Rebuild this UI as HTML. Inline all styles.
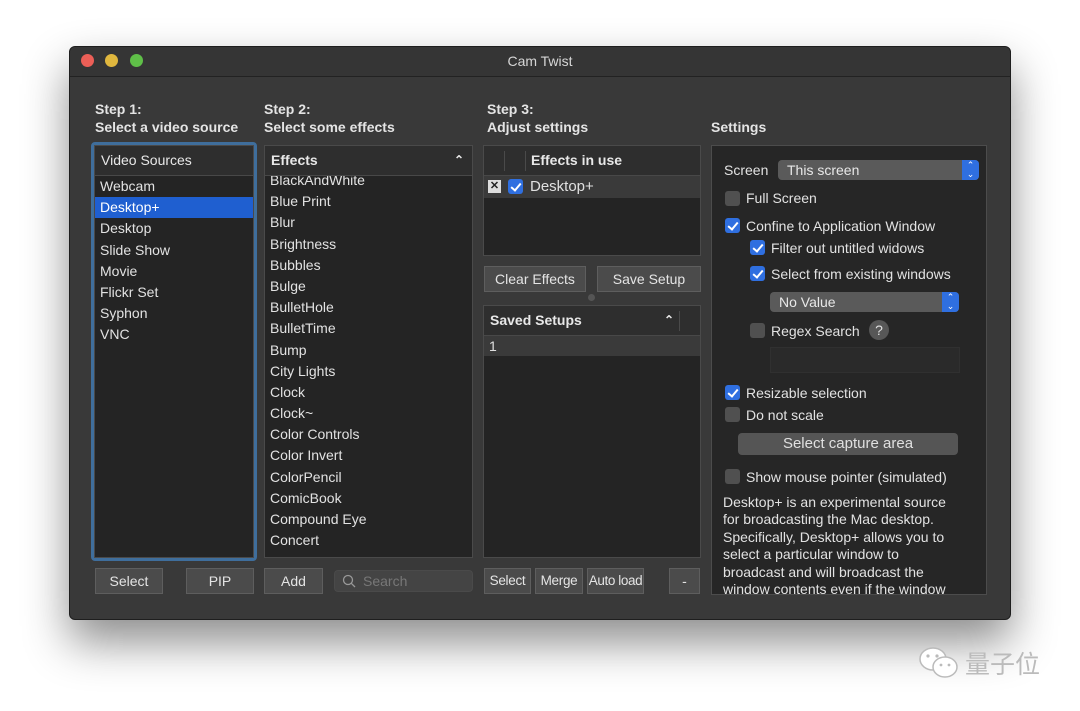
<!DOCTYPE html>
<html><head><meta charset="utf-8"><style>
*{box-sizing:border-box;margin:0;padding:0}
body{width:1080px;height:711px;background:#fff;position:relative;overflow:hidden;font-family:"Liberation Sans",sans-serif;color:#e0e0e0}
.win{position:absolute;left:69px;top:46px;width:942px;height:574px;background:#393939;border:1px solid #1e1e1e;border-radius:6px;box-shadow:0 22px 45px rgba(0,0,0,.45)}
.tb{position:absolute;left:0;top:0;width:100%;height:30px;background:#353535;border-bottom:1px solid #222;border-radius:6px 6px 0 0;text-align:center;line-height:29px;font-size:14px;color:#d6d6d6}
.dot{position:absolute;top:7px;width:13px;height:13px;border-radius:50%}
.a{position:absolute}
.h{font-size:14px;font-weight:bold;line-height:18px;color:#e4e4e4}
.list{position:absolute;background:#242424;border:1px solid #4a4a4a}
.hd{height:30px;background:#2e2e2e;border-bottom:1px solid #484848;font-size:14px;font-weight:bold;line-height:29px;padding-left:6px;color:#e8e8e8;position:relative}
.it{font-size:14px;height:21.2px;line-height:21px;padding-left:5px;color:#e2e2e2}
.btn{position:absolute;height:26px;background:#4b4b4b;border:1px solid #5e5e5e;font-size:14px;line-height:24px;text-align:center;color:#e4e4e4;white-space:nowrap;overflow:hidden}
.cb{position:absolute;width:15px;height:15px;border-radius:3px;background:#505050}
.cb.on{background:#2f6fe0}
.cb.on::after{content:"";position:absolute;left:5px;top:2px;width:4px;height:8px;border:solid #fff;border-width:0 2px 2px 0;transform:rotate(40deg)}
.lb{position:absolute;font-size:14px;line-height:16px;color:#e2e2e2;white-space:nowrap}
.pop{position:absolute;height:20px;background:#5a5a5a;border-radius:4px;font-size:14px;line-height:20px;padding-left:9px;color:#e8e8e8}
.pop .ar{position:absolute;right:0;top:0;width:17px;height:20px;background:#2f6fe0;border-radius:0 4px 4px 0;color:#fff;font-size:9px;line-height:9px;text-align:center;padding-top:1px}
</style></head><body>
<div class="win">
<div class="tb">Cam Twist</div>
<div class="dot" style="left:11px;background:#ec5f57"></div>
<div class="dot" style="left:35px;background:#e0b73e"></div>
<div class="dot" style="left:60px;background:#5fbf48"></div>

<div class="a h" style="left:25px;top:53px">Step 1:<br>Select a video source</div>
<div class="a h" style="left:194px;top:53px">Step 2:<br>Select some effects</div>
<div class="a h" style="left:417px;top:53px">Step 3:<br>Adjust settings</div>
<div class="a h" style="left:641px;top:71px">Settings</div>

<div class="a" style="left:21px;top:95px;width:166px;height:419px;border:3px solid #3f6e9c;border-radius:4px"></div>
<div class="list" style="left:24px;top:98px;width:160px;height:413px">
<div class="hd" style="font-weight:normal">Video Sources</div>
<div class="it">Webcam</div>
<div class="it" style="background:#1f5fd0;color:#fff">Desktop+</div>
<div class="it">Desktop</div><div class="it">Slide Show</div><div class="it">Movie</div><div class="it">Flickr Set</div><div class="it">Syphon</div><div class="it">VNC</div>
</div>

<div class="list" style="left:194px;top:98px;width:209px;height:413px;overflow:hidden">
<div class="hd">Effects<span style="position:absolute;right:8px;top:0;font-size:12px">&#8963;</span></div>
<div style="margin-top:-6px">
<div class="it">BlackAndWhite</div><div class="it">Blue Print</div><div class="it">Blur</div><div class="it">Brightness</div><div class="it">Bubbles</div><div class="it">Bulge</div><div class="it">BulletHole</div><div class="it">BulletTime</div><div class="it">Bump</div><div class="it">City Lights</div><div class="it">Clock</div><div class="it">Clock~</div><div class="it">Color Controls</div><div class="it">Color Invert</div><div class="it">ColorPencil</div><div class="it">ComicBook</div><div class="it">Compound Eye</div><div class="it">Concert</div><div class="it">.</div>
</div></div>

<div class="list" style="left:413px;top:98px;width:218px;height:111px">
<div class="hd" style="padding-left:47px">Effects in use<span style="position:absolute;left:20px;top:5px;height:20px;border-left:1px solid #4a4a4a"></span><span style="position:absolute;left:41px;top:5px;height:20px;border-left:1px solid #4a4a4a"></span></div>
<div style="height:22px;background:#3a3a3a;position:relative;font-size:15px;line-height:22px;padding-left:46px">Desktop+
<span style="position:absolute;left:4px;top:4px;width:13px;height:13px;background:#ddd;color:#222;font-size:11px;line-height:13px;text-align:center;font-weight:bold">✕</span>
<span class="cb on" style="left:24px;top:3px"></span></div>
</div>

<div class="btn" style="left:414px;top:219px;width:102px">Clear Effects</div>
<div class="btn" style="left:527px;top:219px;width:104px">Save Setup</div>
<div class="a" style="left:518px;top:247px;width:7px;height:7px;border-radius:50%;background:#555"></div>

<div class="list" style="left:413px;top:258px;width:218px;height:253px">
<div class="hd">Saved Setups<span style="position:absolute;right:26px;top:0;font-size:12px">&#8963;</span><span style="position:absolute;right:20px;top:5px;height:20px;border-left:1px solid #4a4a4a"></span></div>
<div style="height:20px;background:#3a3a3a;font-size:14px;line-height:20px;padding-left:5px">1</div>
</div>

<div class="list" style="left:641px;top:98px;width:276px;height:450px;background:#262626;border-color:#4c4c4c;overflow:hidden">
<div class="lb" style="left:12px;top:16px">Screen</div>
<div class="pop" style="left:66px;top:14px;width:201px">This screen<div class="ar">⌃<br>⌄</div></div>
<div class="cb" style="left:13px;top:45px"></div><div class="lb" style="left:34px;top:44px">Full Screen</div>
<div class="cb on" style="left:13px;top:72px"></div><div class="lb" style="left:34px;top:72px">Confine to Application Window</div>
<div class="cb on" style="left:38px;top:94px"></div><div class="lb" style="left:59px;top:94px">Filter out untitled widows</div>
<div class="cb on" style="left:38px;top:120px"></div><div class="lb" style="left:59px;top:120px">Select from existing windows</div>
<div class="pop" style="left:58px;top:146px;width:189px">No Value<div class="ar">⌃<br>⌄</div></div>
<div class="cb" style="left:38px;top:177px"></div><div class="lb" style="left:59px;top:177px">Regex Search</div>
<div class="a" style="left:157px;top:174px;width:20px;height:20px;border-radius:50%;background:#575757;font-size:14px;line-height:20px;text-align:center">?</div>
<div class="a" style="left:58px;top:201px;width:190px;height:26px;background:#2a2a2a;border:1px solid #303030"></div>
<div class="cb on" style="left:13px;top:239px"></div><div class="lb" style="left:34px;top:239px">Resizable selection</div>
<div class="cb" style="left:13px;top:261px"></div><div class="lb" style="left:34px;top:261px">Do not scale</div>
<div class="a" style="left:26px;top:287px;width:220px;height:22px;background:#555;border-radius:4px;font-size:15px;line-height:22px;text-align:center">Select capture area</div>
<div class="cb" style="left:13px;top:323px"></div><div class="lb" style="left:34px;top:323px">Show mouse pointer (simulated)</div>
<div class="lb" style="left:11px;top:348px;width:240px;line-height:17.4px;white-space:normal">Desktop+ is an experimental source for broadcasting the Mac desktop. Specifically, Desktop+ allows you to select a particular window to broadcast and will broadcast the window contents even if the window</div>
</div>

<div class="btn" style="left:25px;top:521px;width:68px">Select</div>
<div class="btn" style="left:116px;top:521px;width:68px">PIP</div>
<div class="btn" style="left:194px;top:521px;width:59px">Add</div>
<div class="a" style="left:264px;top:523px;width:139px;height:22px;background:#444;border-radius:4px;border:1px solid #4a4a4a;font-size:14px;line-height:20px;color:#777;padding-left:28px">Search
<svg style="position:absolute;left:7px;top:3px" width="14" height="14" viewBox="0 0 14 14"><circle cx="6" cy="6" r="4.5" fill="none" stroke="#999" stroke-width="1.3"/><path d="M9.3 9.3L13 13" stroke="#999" stroke-width="1.3"/></svg></div>
<div class="btn" style="left:414px;top:521px;width:47px;font-size:13.5px;letter-spacing:-.3px">Select</div>
<div class="btn" style="left:465px;top:521px;width:48px;font-size:13.5px;letter-spacing:-.3px">Merge</div>
<div class="btn" style="left:517px;top:521px;width:57px;font-size:13.5px;letter-spacing:-.4px">Auto load</div>
<div class="btn" style="left:599px;top:521px;width:31px">-</div>
</div>

<div class="a" style="left:918px;top:646px;width:44px;height:34px">
<svg width="44" height="34" viewBox="0 0 44 34"><ellipse cx="15" cy="13" rx="13" ry="11" fill="#fff" stroke="#bbb" stroke-width="1.5"/><ellipse cx="27" cy="21" rx="12" ry="10" fill="#fff" stroke="#bbb" stroke-width="1.5"/><circle cx="10" cy="10" r="1.6" fill="#bbb"/><circle cx="19" cy="10" r="1.6" fill="#bbb"/><circle cx="23" cy="19" r="1.4" fill="#bbb"/><circle cx="31" cy="19" r="1.4" fill="#bbb"/></svg></div>
<div class="a" style="left:965px;top:646px;font-family:'Noto Sans CJK SC',sans-serif;font-size:25px;color:#bbb;line-height:34px">量子位</div>
</body></html>
